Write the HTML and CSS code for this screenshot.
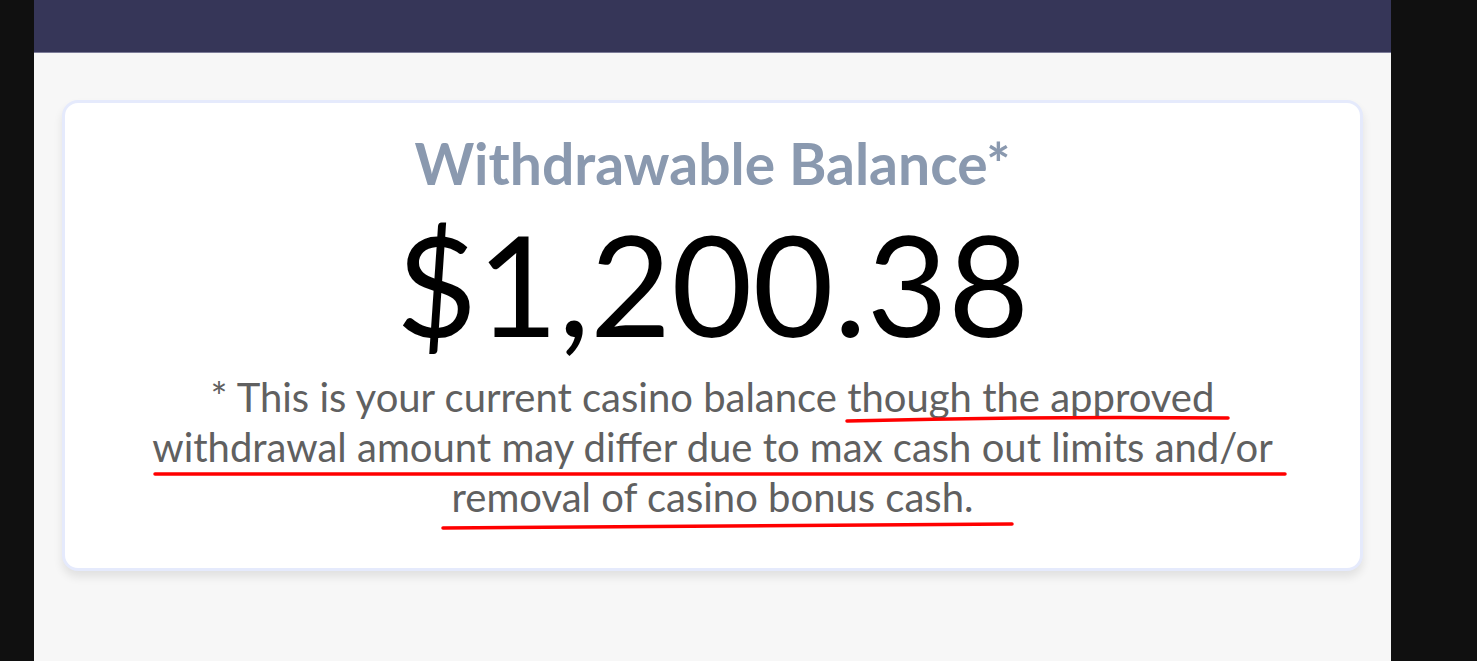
FILE: index.html
```html
<!DOCTYPE html>
<html lang="en">
<head>
    <meta charset="UTF-8">
    <meta name="viewport" content="width=device-width, initial-scale=1.0">
    <title>Withdrawable Balance</title>
    <link rel="stylesheet" href="styles.css">
</head>
<body>

<div class="app">
    <header class="topbar"></header>

    <main class="content">
        <div class="balance-card">
            <h2 class="balance-title">Withdrawable Balance*</h2>
            <div class="balance-amount">$1,200.38</div>
            <p class="balance-note">* This is your current casino balance though the approved withdrawal amount may differ due to max cash out limits and/or removal of casino bonus cash.</p>

            <!-- red pen marks on top of the note -->
            <svg class="marks" width="1299" height="466" viewBox="0 0 1299 466">
                <path d="M784 319 Q975 314 1165 316" />
                <path d="M92 372 Q650 370 1222 372" />
                <path d="M380 426 Q660 423 949 422" />
            </svg>
        </div>
    </main>
</div>

</body>
</html>
```

FILE: styles.css
```css
body {
    margin: 0;
    background-color: #101010;
    font-family: Lato, "Open Sans", sans-serif;
    overflow: hidden;
}
.app {
    width: 1357px;
    height: 661px;
    margin-left: 34px;
    background-color: #f7f7f7;
}
.topbar {
    height: 52px;
    background-color: #363658;
    border-bottom: 1px solid #7c7c98;
}
.content {
    padding: 47px 28px 0;
}
.balance-card {
    position: relative;
    background: white;
    border: 3px solid #e5eafc;
    border-radius: 16px;
    box-shadow: 0 6px 10px rgba(0,0,0,0.09);
    padding: 28px 0 46px;
    text-align: center;
}
.balance-title {
    margin: 0;
    font-size: 57px;
    line-height: 64px;
    font-weight: 700;
    color: #8a99af;
}
.balance-amount {
    margin-top: 13px;
    font-size: 140px;
    line-height: 150px;
    color: #000;
}
.balance-note {
    margin: 14px auto 0;
    max-width: 1135px;
    font-size: 40px;
    line-height: 50px;
    color: #606060;
}
.marks {
    position: absolute;
    left: -2px;
    top: -1px;
    pointer-events: none;
}
.marks path {
    fill: none;
    stroke: #ff0000;
    stroke-width: 3.5;
    stroke-linecap: round;
}
```
